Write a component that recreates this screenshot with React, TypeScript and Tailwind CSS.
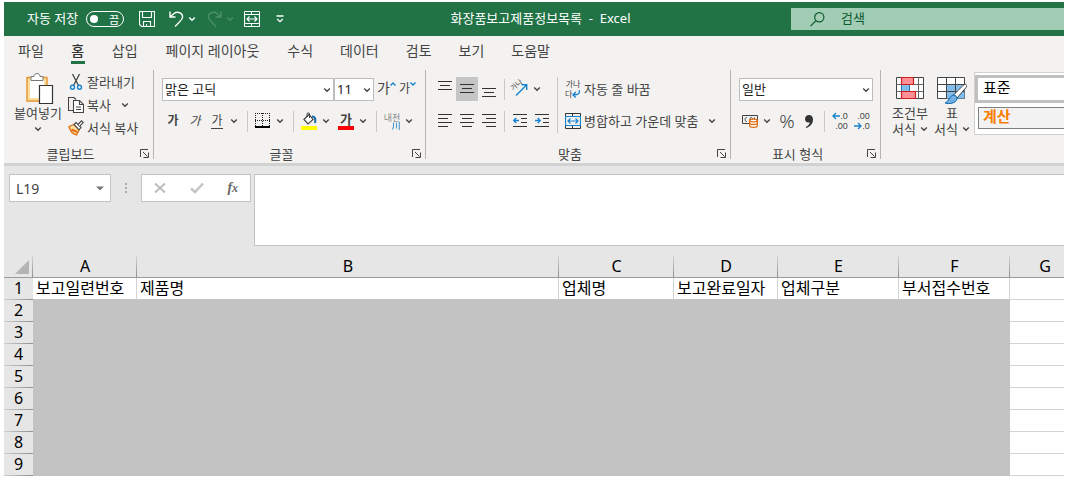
import { useState } from 'react';
import type { ReactNode } from 'react';

const TABS = ['파일', '홈', '삽입', '페이지 레이아웃', '수식', '데이터', '검토', '보기', '도움말'];

const COLUMNS = [
  { id: 'A', title: '보고일련번호', width: 'w-[104px]' },
  { id: 'B', title: '제품명', width: 'w-[422px]' },
  { id: 'C', title: '업체명', width: 'w-[115px]' },
  { id: 'D', title: '보고완료일자', width: 'w-[104px]' },
  { id: 'E', title: '업체구분', width: 'w-[121px]' },
  { id: 'F', title: '부서접수번호', width: 'w-[111px]' },
];

const ROWS = [2, 3, 4, 5, 6, 7, 8, 9];

function Chevron({ className = '' }: { className?: string }) {
  return (
    <svg viewBox="0 0 8 8" className={`h-2 w-2 shrink-0 ${className}`} fill="none" stroke="currentColor" strokeWidth="1.4">
      <path d="M1.2 2.5 L4 5.2 L6.8 2.5" />
    </svg>
  );
}

function ChevronButton({ label }: { label: string }) {
  return (
    <button aria-label={label} className="flex h-6 w-3 shrink-0 items-center justify-center">
      <Chevron />
    </button>
  );
}

function ToolButton({ label, active, children }: { label: string; active?: boolean; children: ReactNode }) {
  return (
    <button
      aria-label={label}
      className={`flex h-6 w-[22px] shrink-0 items-center justify-center ${active ? 'bg-[#c5c5c5]' : ''}`}
    >
      {children}
    </button>
  );
}

function SplitButton({ label, children }: { label: string; children: ReactNode }) {
  return (
    <div className="flex items-center gap-[3px]">
      <button aria-label={label} className="flex h-6 w-4 items-center justify-center">
        {children}
      </button>
      <ChevronButton label={`${label} 옵션`} />
    </div>
  );
}

function Divider({ className = 'mx-[7px]' }: { className?: string }) {
  return <div className={`h-[21px] w-px shrink-0 bg-[#c8c8c8] ${className}`} />;
}

function Group({ name, className = '', children }: { name: string; className?: string; children: ReactNode }) {
  return (
    <section aria-label={name} className={`flex flex-col justify-between pb-px ${className}`}>
      {children}
      <div className="flex h-4 items-center">
        <span className="flex-1 text-center">{name}</span>
        <button aria-label={`${name} 설정`} className="flex h-4 w-4 items-center justify-center">
          <svg viewBox="0 0 10 10" className="h-2.5 w-2.5" fill="none" stroke="#444" strokeWidth="1">
            <path d="M0.5 8 V0.5 H8 M3 3 L7.5 7.5 M8.5 3.5 V8.5 H3.5" />
          </svg>
        </button>
      </div>
    </section>
  );
}

function GroupLine() {
  return <div className="mb-1 w-px shrink-0 bg-[#b5b5b5]" />;
}

function Dropdown({ label, value, className }: { label: string; value: string; className: string }) {
  return (
    <div className={`relative ${className}`}>
      <select
        aria-label={label}
        className="h-[23px] w-full appearance-none border border-[#bdbdbd] bg-white pl-0.5 text-[13px] text-[#222] outline-none"
      >
        <option>{value}</option>
      </select>
      <Chevron className="pointer-events-none absolute top-2 right-[3px]" />
    </div>
  );
}

// d holds the rows of a paragraph icon, four lines for text and three for vertical alignment
function LinesIcon({ d }: { d: string }) {
  return (
    <svg viewBox="0 0 14 20" className="h-5 w-[14px]" fill="none" stroke="#333" strokeWidth="1">
      <path d={d} />
    </svg>
  );
}

function IndentIcon({ arrow }: { arrow: string }) {
  return (
    <svg viewBox="0 0 14 20" className="h-5 w-[14px]" fill="none">
      <path d="M0 3.5 H14 M8 7.5 H14 M8 11.5 H14 M0 15.5 H14" stroke="#333" />
      <path d={arrow} stroke="#1683d0" strokeWidth="1.4" />
    </svg>
  );
}

function MergeIcon({ line, arrow }: { line: string; arrow: string }) {
  return (
    <svg viewBox="0 0 16 16" className="h-4 w-4 shrink-0" fill="none">
      <path d="M0.5 3 V0.5 H15.5 V3 M0.5 13 V15.5 H15.5 V13 M7.5 0.5 V3 M7.5 13 V15.5" stroke={line} />
      <path d="M0.5 3.5 H15.5 V12.5 H0.5 Z M3 8 H13 M5.5 5.5 L3 8 L5.5 10.5 M10.5 5.5 L13 8 L10.5 10.5" stroke={arrow} strokeWidth="1.2" />
    </svg>
  );
}

function TitleBar() {
  const [query, setQuery] = useState('');
  const [autoSave, setAutoSave] = useState(false);

  return (
    <header className="flex h-[34px] items-center bg-[#217346] text-[13px] text-white">
      <div className="flex items-center pl-[23px]">
        <span id="autosave" className="w-[59px]">자동 저장</span>
        <button
          role="switch"
          aria-checked={autoSave}
          aria-labelledby="autosave"
          onClick={() => setAutoSave(!autoSave)}
          className="flex h-4 w-[38px] items-center justify-between rounded-full border border-white pr-1 pl-[3px] text-[11px] leading-none"
        >
          <span className="h-2 w-2 rounded-full bg-white" />
          {autoSave ? '켬' : '끔'}
        </button>
        <button aria-label="저장" className="ml-[15px]">
          <svg viewBox="0 0 16 16" className="h-4 w-4" fill="none" stroke="currentColor" strokeWidth="1.1">
            <path d="M0.5 0.5 H15.5 V15.5 H2.5 L0.5 13.5 Z M3.5 0.5 V6.5 H12.5 V0.5 M4.5 15.5 V10.5 H11.5 V15.5 M7.5 13 V15.5" />
          </svg>
        </button>
        <button aria-label="실행 취소" className="ml-[14px]">
          <svg viewBox="0 0 15 16" className="h-4 w-[15px]" fill="none" stroke="currentColor" strokeWidth="1.4">
            <path d="M1 0.5 V6 H6.5 M1.2 5.8 L5 2.5 C9 -0.2 14 2.2 13.5 6.5 C13.2 9 10 11 6 15.5" />
          </svg>
        </button>
        <Chevron className="ml-1" />
        <button aria-label="다시 실행" className="ml-[11px] text-[#4d9069]">
          <svg viewBox="0 0 15 16" className="h-4 w-[15px]" fill="none" stroke="currentColor" strokeWidth="1.4">
            <path d="M14 0.5 V6 H8.5 M13.8 5.8 L10 2.5 C6 -0.2 1 2.2 1.5 6.5 C1.8 9 5 11 9 15.5" />
          </svg>
        </button>
        <Chevron className="ml-1 text-[#4d9069]" />
        <button aria-label="병합하고 가운데 맞춤" className="ml-[10px]">
          <MergeIcon line="#fff" arrow="#fff" />
        </button>
        <button aria-label="빠른 실행 도구 모음 사용자 지정" className="ml-4">
          <svg viewBox="0 0 8 8" className="h-2 w-2" fill="none" stroke="currentColor" strokeWidth="1.3">
            <path d="M0.5 1 H7.5 M1.2 4 L4 6.7 L6.8 4" />
          </svg>
        </button>
      </div>
      <h1 className="flex-1 pl-1.5 text-center whitespace-pre">화장품보고제품정보목록  -  Excel</h1>
      <label className="flex h-[22px] w-[273px] items-center gap-4 bg-[#a0cdb4] pl-[19px] text-[#0f5a30]">
        <svg viewBox="0 0 15 15" className="h-[15px] w-[15px] shrink-0" fill="none" stroke="currentColor" strokeWidth="1.2">
          <circle cx="9.3" cy="5.3" r="4.6" />
          <path d="M6 8.7 L0.5 14.2" />
        </svg>
        <input
          type="text"
          aria-label="검색"
          placeholder="검색"
          value={query}
          onChange={(e) => setQuery(e.target.value)}
          className="min-w-0 flex-1 bg-transparent outline-none placeholder:text-[#0f5a30]"
        />
      </label>
    </header>
  );
}

function ClipboardGroup() {
  return (
    <Group name="클립보드" className="w-[149px]">
      <div className="flex gap-1 pl-2">
        <button className="flex w-[52px] flex-col items-center pt-[3px] whitespace-nowrap">
          <svg viewBox="0 0 32 32" className="h-8 w-8" fill="none">
            <path d="M5 4.5 H25 V28 H5 Z" fill="#fbe0a0" stroke="#e8932c" strokeWidth="1.4" />
            <path d="M8 7 H22 V25 H8 Z" fill="#fff" />
            <path d="M9 7.5 V3.5 H12 C12 -0.5 18 -0.5 18 3.5 H21 V7.5 Z" fill="#fff" stroke="#777" />
            <path d="M17.5 12.5 H30.5 V30.5 H17.5 Z" fill="#fff" stroke="#333" strokeWidth="1.2" />
          </svg>
          <span className="leading-4">붙여넣기</span>
          <Chevron className="mt-1" />
        </button>
        <div className="flex flex-col">
          <button className="flex h-[23px] items-center gap-[3px]">
            <svg viewBox="0 0 16 18" className="h-[18px] w-4" fill="none">
              <path d="M4.5 1 L10.5 12.5 M11.5 1 L5.5 12.5" stroke="#444" strokeWidth="1.3" />
              <circle cx="4.5" cy="14.3" r="2" stroke="#1683d0" strokeWidth="1.4" />
              <circle cx="11.5" cy="14.3" r="2" stroke="#1683d0" strokeWidth="1.4" />
            </svg>
            잘라내기
          </button>
          <div className="flex h-[23px] items-center">
            <button className="flex items-center gap-[3px]">
              <svg viewBox="0 0 16 16" className="h-4 w-4" fill="none" stroke="#444" strokeWidth="1.1">
                <path d="M5 13.5 H0.5 V0.5 H6 L8 2.5" />
                <path d="M5.5 3.5 H11.5 L15.5 7.5 V15.5 H5.5 Z" fill="#fff" />
                <path d="M11.5 3.5 V7.5 H15.5 M8 10 H13 M8 12.5 H13" />
              </svg>
              복사
            </button>
            <span className="ml-2">
              <ChevronButton label="복사 옵션" />
            </span>
          </div>
          <button className="flex h-[23px] items-center gap-[3px] whitespace-nowrap">
            <svg viewBox="0 0 16 16" className="h-4 w-4" fill="none">
              <path d="M1 6.5 L6 4.5 L11 10 L8.5 15 C5 14 2 10.5 1 6.5 Z" fill="#fbe0a0" stroke="#e36c0a" strokeWidth="1.3" />
              <path d="M3.5 9.5 L9 12" stroke="#e36c0a" strokeWidth="2" />
              <path d="M6 4.5 L8 2.5 L13 7.5 L11 9.8 Z" fill="#fff" stroke="#444" strokeWidth="1.1" />
              <path d="M10 4.5 L13.5 0.8 L15.3 2.5 L11.8 6.2" fill="#fff" stroke="#444" strokeWidth="1.1" />
            </svg>
            서식 복사
          </button>
        </div>
      </div>
    </Group>
  );
}

function FontGroup() {
  return (
    <Group name="글꼴" className="w-[271px]">
      <div className="flex flex-col gap-2 pt-[7px] pl-2">
        <div className="flex h-6 items-center">
          <Dropdown label="글꼴" value="맑은 고딕" className="w-[172px]" />
          <Dropdown label="글꼴 크기" value="11" className="w-10" />
          <button aria-label="글꼴 크기 크게" className="ml-[3px] flex h-6 w-[22px] text-[14px] leading-[22px]">
            가
            <svg viewBox="0 0 6 6" className="mt-1 h-1.5 w-1.5 shrink-0" fill="none" stroke="#1683d0" strokeWidth="1.4">
              <path d="M0.5 4.5 L3 2 L5.5 4.5" />
            </svg>
          </button>
          <button aria-label="글꼴 크기 작게" className="flex h-6 w-[22px] text-[12px] leading-6">
            가
            <svg viewBox="0 0 6 6" className="mt-1 h-1.5 w-1.5 shrink-0" fill="none" stroke="#1683d0" strokeWidth="1.4">
              <path d="M0.5 1.5 L3 4 L5.5 1.5" />
            </svg>
          </button>
        </div>
        <div className="flex h-6 items-center text-[12px]">
          <ToolButton label="굵게"><b>가</b></ToolButton>
          <ToolButton label="기울임꼴"><i>가</i></ToolButton>
          <ToolButton label="밑줄">
            <span className="border-b border-[#444] leading-[14px]">가</span>
          </ToolButton>
          <ChevronButton label="밑줄 옵션" />
          <Divider />
          <SplitButton label="테두리">
            <svg viewBox="0 0 16 16" className="h-4 w-4" fill="none" stroke="#222" shapeRendering="crispEdges">
              <path d="M0 0.5 H15 M0 7.5 H15 M0.5 0 V13 M7.5 0 V13 M14.5 0 V13" strokeDasharray="1 1" />
              <path d="M0 14 H15" stroke="#000" strokeWidth="2" />
            </svg>
          </SplitButton>
          <Divider />
          <SplitButton label="채우기 색">
            <svg viewBox="0 0 16 18" className="h-[18px] w-4" fill="none">
              <path d="M3 7.5 L8 2.5 L12 7.5 L7 12 Z" fill="#fff" stroke="#444" strokeWidth="1.2" />
              <path d="M6 5 V2 C6 0.5 8.5 0.5 8.5 2 V6" stroke="#444" />
              <path d="M11 4.5 C14 4.5 15 7 14 11" stroke="#1369a8" strokeWidth="2" />
              <path d="M0 14 H16 V18 H0 Z" fill="#ffff00" />
            </svg>
          </SplitButton>
          <div className="ml-1.5">
            <SplitButton label="글꼴 색">
              <span className="border-b-4 border-[#ff0000] px-0.5 text-[13px] leading-[14px] font-bold">가</span>
            </SplitButton>
          </div>
          <Divider />
          <SplitButton label="윗주 필드">
            <span className="flex flex-col items-end text-[9px] leading-[9px] whitespace-nowrap text-[#888]">
              내천
              <svg viewBox="0 0 8 8" className="h-2 w-2" fill="none" stroke="#4f97cc" strokeWidth="1.1">
                <path d="M1.5 0.5 V5 L0.5 7.5 M4.5 0.5 V6.5 M7.3 0 V8" />
              </svg>
            </span>
          </SplitButton>
        </div>
      </div>
    </Group>
  );
}

function AlignmentGroup() {
  return (
    <Group name="맞춤" className="w-[304px]">
      <div className="flex pt-[7px] pl-2">
        <div className="flex flex-col gap-2">
          <div className="flex h-6 items-center">
            <ToolButton label="위쪽 맞춤"><LinesIcon d="M0 2.5 H14 M2 6.5 H12 M0 10.5 H14" /></ToolButton>
            <ToolButton label="가운데 맞춤" active><LinesIcon d="M0 5.5 H14 M2 9.5 H12 M0 13.5 H14" /></ToolButton>
            <ToolButton label="아래쪽 맞춤"><LinesIcon d="M0 9.5 H14 M2 13.5 H12 M0 17.5 H14" /></ToolButton>
            <Divider className="mx-1" />
            <ToolButton label="방향">
              <svg viewBox="0 0 20 22" className="h-[22px] w-5 overflow-visible" fill="none">
                <path d="M6 17.5 L16.5 7 M11.5 6.8 H16.7 V12" stroke="#1683d0" strokeWidth="1.4" />
                <text x="3" y="13" fontSize="7" fill="#444" transform="rotate(-40 3 13)">가나</text>
              </svg>
            </ToolButton>
            <ChevronButton label="방향 옵션" />
          </div>
          <div className="flex h-6 items-center">
            <ToolButton label="왼쪽 맞춤"><LinesIcon d="M0 3.5 H14 M0 7.5 H10 M0 11.5 H14 M0 15.5 H10" /></ToolButton>
            <ToolButton label="가로 가운데 맞춤"><LinesIcon d="M0 3.5 H14 M2 7.5 H12 M0 11.5 H14 M2 15.5 H12" /></ToolButton>
            <ToolButton label="오른쪽 맞춤"><LinesIcon d="M0 3.5 H14 M4 7.5 H14 M0 11.5 H14 M4 15.5 H14" /></ToolButton>
            <Divider className="mx-1" />
            <ToolButton label="내어쓰기"><IndentIcon arrow="M6 9.5 H0.8 M3.2 7 L0.8 9.5 L3.2 12" /></ToolButton>
            <ToolButton label="들여쓰기"><IndentIcon arrow="M0 9.5 H5.2 M2.8 7 L5.2 9.5 L2.8 12" /></ToolButton>
          </div>
        </div>
        <div className="mr-[7px] ml-1 w-px bg-[#c8c8c8]" />
        <div className="flex flex-col gap-2">
          <button className="flex h-6 items-center gap-[3px]">
            <span className="flex w-4 flex-col text-[8px] leading-[10px] whitespace-nowrap">
              가나
              <span className="flex items-center">
                다
                <svg viewBox="0 0 9 8" className="h-2 w-[9px]" fill="none" stroke="#1683d0" strokeWidth="1.4">
                  <path d="M7.5 0 C8.5 3 6.5 5 1.5 5 M4 2 L1 5 L4 7.6" />
                </svg>
              </span>
            </span>
            자동 줄 바꿈
          </button>
          <div className="flex h-6 items-center gap-2">
            <button className="flex items-center gap-[3px] whitespace-nowrap">
              <MergeIcon line="#333" arrow="#1683d0" />
              병합하고 가운데 맞춤
            </button>
            <ChevronButton label="병합 옵션" />
          </div>
        </div>
      </div>
    </Group>
  );
}

function NumberGroup() {
  return (
    <Group name="표시 형식" className="w-[149px]">
      <div className="flex flex-col gap-2 pt-[7px] pl-2">
        <div className="flex h-6 items-center">
          <Dropdown label="표시 형식" value="일반" className="w-[134px]" />
        </div>
        <div className="flex h-6 items-center pl-[3px]">
          <SplitButton label="회계 표시 형식">
            <svg viewBox="0 0 16 14" className="h-[14px] w-4" fill="none">
              <path d="M0.5 1.5 H15.5 V9.5 H0.5 Z" stroke="#444" />
              <path d="M5 3.5 C2.5 3 2.5 8 5 7.5 M8 9 V5 C8 3 10.5 3 10.5 5 M12.5 3.5 V6" stroke="#444" />
              <path d="M7.7 6.5 V12 C7.7 13.8 15.3 13.8 15.3 12 V6.5" fill="#fff" stroke="#e36c0a" strokeWidth="1.2" />
              <ellipse cx="11.5" cy="6.5" rx="3.8" ry="1.3" fill="#fff" stroke="#e36c0a" strokeWidth="1.2" />
              <path d="M7.7 9.3 C8 10.8 15 10.8 15.3 9.3" stroke="#e36c0a" strokeWidth="1.2" />
            </svg>
          </SplitButton>
          <div className="ml-[3px] flex items-center">
            <ToolButton label="백분율 스타일"><span className="text-[19px] leading-6 font-light">%</span></ToolButton>
            <ToolButton label="쉼표 스타일">
              <svg viewBox="0 0 8 13" className="h-[13px] w-2">
                <path d="M4 0 C6.5 0 8 1.8 8 4.5 C8 8.5 5 12 1 13 L0.8 12 C3.2 11 4.5 9.5 4.8 7.3 C2 8.3 0 6.5 0 4 C0 1.8 1.6 0 4 0 Z" fill="#333" />
              </svg>
            </ToolButton>
            <Divider className="mx-1" />
            <ToolButton label="자릿수 늘림">
              <span className="flex flex-col items-end font-['Liberation_Sans',sans-serif] text-[9px] leading-[10px]">
                <span className="flex items-center">
                  <svg viewBox="0 0 8 8" className="h-2 w-2" fill="none" stroke="#1683d0" strokeWidth="1.3">
                    <path d="M8 4 H1 M4 1 L1 4 L4 7" />
                  </svg>
                  .0
                </span>
                .00
              </span>
            </ToolButton>
            <ToolButton label="자릿수 줄임">
              <span className="flex flex-col items-end font-['Liberation_Sans',sans-serif] text-[9px] leading-[10px]">
                .00
                <span className="flex items-center">
                  <svg viewBox="0 0 8 8" className="h-2 w-2" fill="none" stroke="#1683d0" strokeWidth="1.3">
                    <path d="M0 4 H7 M4 1 L7 4 L4 7" />
                  </svg>
                  .0
                </span>
              </span>
            </ToolButton>
          </div>
        </div>
      </div>
    </Group>
  );
}

function StylesGroup() {
  return (
    <section aria-label="스타일" className="flex min-w-0 flex-1 items-start pl-2">
      <button className="flex w-[42px] flex-col items-center pt-[7px] leading-4 whitespace-nowrap">
        <svg viewBox="0 0 28 22" className="mb-1.5 h-[22px] w-7" fill="none">
          <path d="M0.5 0.5 H27.5 V21.5 H0.5 Z" fill="#fff" stroke="#444" />
          <path d="M5.5 0.5 V21.5 M22.5 0.5 V21.5 M0.5 7.5 H27.5 M0.5 14.5 H27.5" stroke="#666" />
          <path d="M5.5 7.5 H13.5 V14.5 H5.5 Z" fill="#83bdec" stroke="#2a7ab8" />
          <path d="M5.5 0.5 H17.5 V7.5 H5.5 Z M5.5 14.5 H19.5 V21.5 H5.5 Z" fill="#ff9096" stroke="#d02020" strokeWidth="1.2" />
        </svg>
        조건부
        <span className="flex items-center gap-1">서식 <Chevron /></span>
      </button>
      <button className="flex w-[42px] flex-col items-center pt-[7px] leading-4 whitespace-nowrap">
        <svg viewBox="0 0 30 28" className="h-7 w-[30px]" fill="none">
          <path d="M0.5 0.5 H27.5 V21.5 H0.5 Z" fill="#fff" stroke="#444" />
          <path d="M9.5 7.5 H27.5 V21.5 H9.5 Z" fill="#83bdec" />
          <path d="M9.5 0.5 V21.5 M18.5 0.5 V21.5 M0.5 7.5 H27.5 M0.5 14.5 H27.5" stroke="#444" />
          <path d="M28 7 C30 7.5 30 9 29 10.5 L20 21 L16.5 18 L26 8.5 Z" fill="#fff" stroke="#444" />
          <path d="M16 18 C19 18 20.5 20 20 22 C19 26 13 27.5 8 26 C12 25 12 19 16 18 Z" fill="#6fb1e6" stroke="#1369a8" />
        </svg>
        표
        <span className="flex items-center gap-1">서식 <Chevron /></span>
      </button>
      <div className="mt-0.5 ml-px flex min-w-0 flex-1 flex-col gap-1 border border-r-0 border-[#d0d0d0] bg-white pt-0.5 pb-[5px] text-[15px] text-black">
        <button className="h-7 border-[3px] border-r-0 border-[#c0c0c0] bg-white pb-1 pl-[5px] text-left leading-[18px]">표준</button>
        <button className="ml-[3px] h-[22px] border border-r-0 border-[#7f7f7f] bg-[#f2f2f2] pb-1 pl-1 text-left leading-4 font-bold text-[#fa7d00]">
          계산
        </button>
      </div>
    </section>
  );
}

function FormulaBar() {
  const [cell, setCell] = useState('L19');

  return (
    <div className="flex items-start pt-2 pl-[5px]">
      <div className="flex h-7 w-[102px] items-center border border-[#c3c3c3] bg-white px-1.5">
        <input
          aria-label="이름 상자"
          value={cell}
          onChange={(e) => setCell(e.target.value)}
          className="min-w-0 flex-1 bg-transparent text-[14px] text-[#444] outline-none"
        />
        <button aria-label="이름 목록">
          <svg viewBox="0 0 8 5" className="h-[5px] w-2" fill="#777">
            <path d="M0 0.5 H8 L4 4.5 Z" />
          </svg>
        </button>
      </div>
      <svg viewBox="0 0 2 10" className="mx-[14px] mt-[9px] h-2.5 w-0.5" fill="#aaa">
        <path d="M0 0 H2 V2 H0 Z M0 4 H2 V6 H0 Z M0 8 H2 V10 H0 Z" />
      </svg>
      <div className="flex h-7 w-[110px] items-center justify-around border border-[#c3c3c3] bg-white">
        <button aria-label="취소">
          <svg viewBox="0 0 12 12" className="h-3 w-3" fill="none" stroke="#bbb" strokeWidth="1.8">
            <path d="M1 1.5 L11 10.5 M11 1.5 L1 10.5" />
          </svg>
        </button>
        <button aria-label="입력">
          <svg viewBox="0 0 14 12" className="h-3 w-[14px]" fill="none" stroke="#c3c3c3" strokeWidth="2.4">
            <path d="M1 6.5 L5 10 L13 1.5" />
          </svg>
        </button>
        <button aria-label="함수 삽입" className="font-['Liberation_Serif',serif] text-[14px] leading-none font-bold text-[#666] italic">
          f<span className="text-[12px]">x</span>
        </button>
      </div>
      <textarea aria-label="수식 입력줄" className="ml-[3px] h-[72px] min-w-0 flex-1 resize-none border border-r-0 border-[#c3c3c3] bg-white outline-none" />
    </div>
  );
}

function HeaderEdge() {
  return <span className="absolute top-0 right-0 h-full w-px bg-linear-to-b from-[#d4d4d4] to-[#8f8f8f]" />;
}

function RowEdge() {
  return <span className="absolute bottom-0 left-0 h-px w-full bg-linear-to-r from-[#cfcfcf] to-[#8f8f8f]" />;
}

function Sheet() {
  return (
    <table className="mt-2.5 w-full table-fixed border-separate border-spacing-0 bg-white text-[16px] leading-5 text-black">
      <thead>
        <tr className="h-[22px] bg-[#e6e6e6] align-top">
          <th className="relative w-[29px] border-b border-[#9b9b9b] p-0 pt-1">
            <svg viewBox="0 0 14 14" className="ml-[11px] h-[14px] w-[14px]" fill="#b4b4b4">
              <path d="M14 0 V14 H0 Z" />
            </svg>
            <HeaderEdge />
          </th>
          {COLUMNS.map((col) => (
            <th key={col.id} scope="col" className={`relative border-b border-[#9b9b9b] p-0 font-normal ${col.width}`}>
              {col.id}
              <HeaderEdge />
            </th>
          ))}
          <th scope="col" className="border-b border-[#9b9b9b] p-0 pl-4 font-normal">G</th>
        </tr>
      </thead>
      <tbody className="align-top">
        <tr className="h-[22px]">
          <th scope="row" className="relative bg-[#e6e6e6] p-0 font-normal">
            1
            <RowEdge />
          </th>
          {COLUMNS.map((col) => (
            <td key={col.id} className="overflow-hidden border-r border-b border-r-[#d4d4d4] border-b-[#c3c3c3] p-0 pl-[3px] whitespace-nowrap">
              {col.title}
            </td>
          ))}
          <td className="border-b border-[#d4d4d4] p-0" />
        </tr>
        {ROWS.map((row) => (
          <tr key={row} className="h-[22px]">
            <th scope="row" className="relative bg-[#e6e6e6] p-0 font-normal">
              {row}
              <RowEdge />
            </th>
            <td colSpan={6} className="bg-[#c3c3c3] p-0" />
            <td className="border-b border-[#d4d4d4] p-0" />
          </tr>
        ))}
      </tbody>
    </table>
  );
}

export default function App() {
  const [activeTab, setActiveTab] = useState('홈');

  return (
    <div className="bg-white pt-0.5 pr-2 pb-1 pl-1 font-['Noto_Sans','Noto_Sans_CJK_KR',sans-serif]">
      <TitleBar />

      <div className="border-b-[3px] border-[#d2d2d2] bg-[#f3f2f1] text-[#444]">
        {/* Tabs */}
        <nav className="flex h-[34px] items-start gap-px pl-px text-[14px] leading-5">
          {TABS.map((tab) => (
            <button
              key={tab}
              onClick={() => setActiveTab(tab)}
              className={`flex flex-col items-center pt-[5px] whitespace-nowrap ${tab === '페이지 레이아웃' ? 'px-[14px]' : 'px-[13px]'} ${
                activeTab === tab ? 'font-medium text-[#333]' : ''
              }`}
            >
              {tab}
              {activeTab === tab && <span className="h-[3px] w-[14px] bg-[#217346]" />}
            </button>
          ))}
        </nav>

        {/* Ribbon */}
        <div className="flex h-[93px] items-stretch text-[13px] leading-5">
          <ClipboardGroup />
          <GroupLine />
          <FontGroup />
          <GroupLine />
          <AlignmentGroup />
          <GroupLine />
          <NumberGroup />
          <GroupLine />
          <StylesGroup />
        </div>
      </div>

      <div className="bg-[#e6e6e6]">
        <FormulaBar />
        <Sheet />
      </div>
    </div>
  );
}
